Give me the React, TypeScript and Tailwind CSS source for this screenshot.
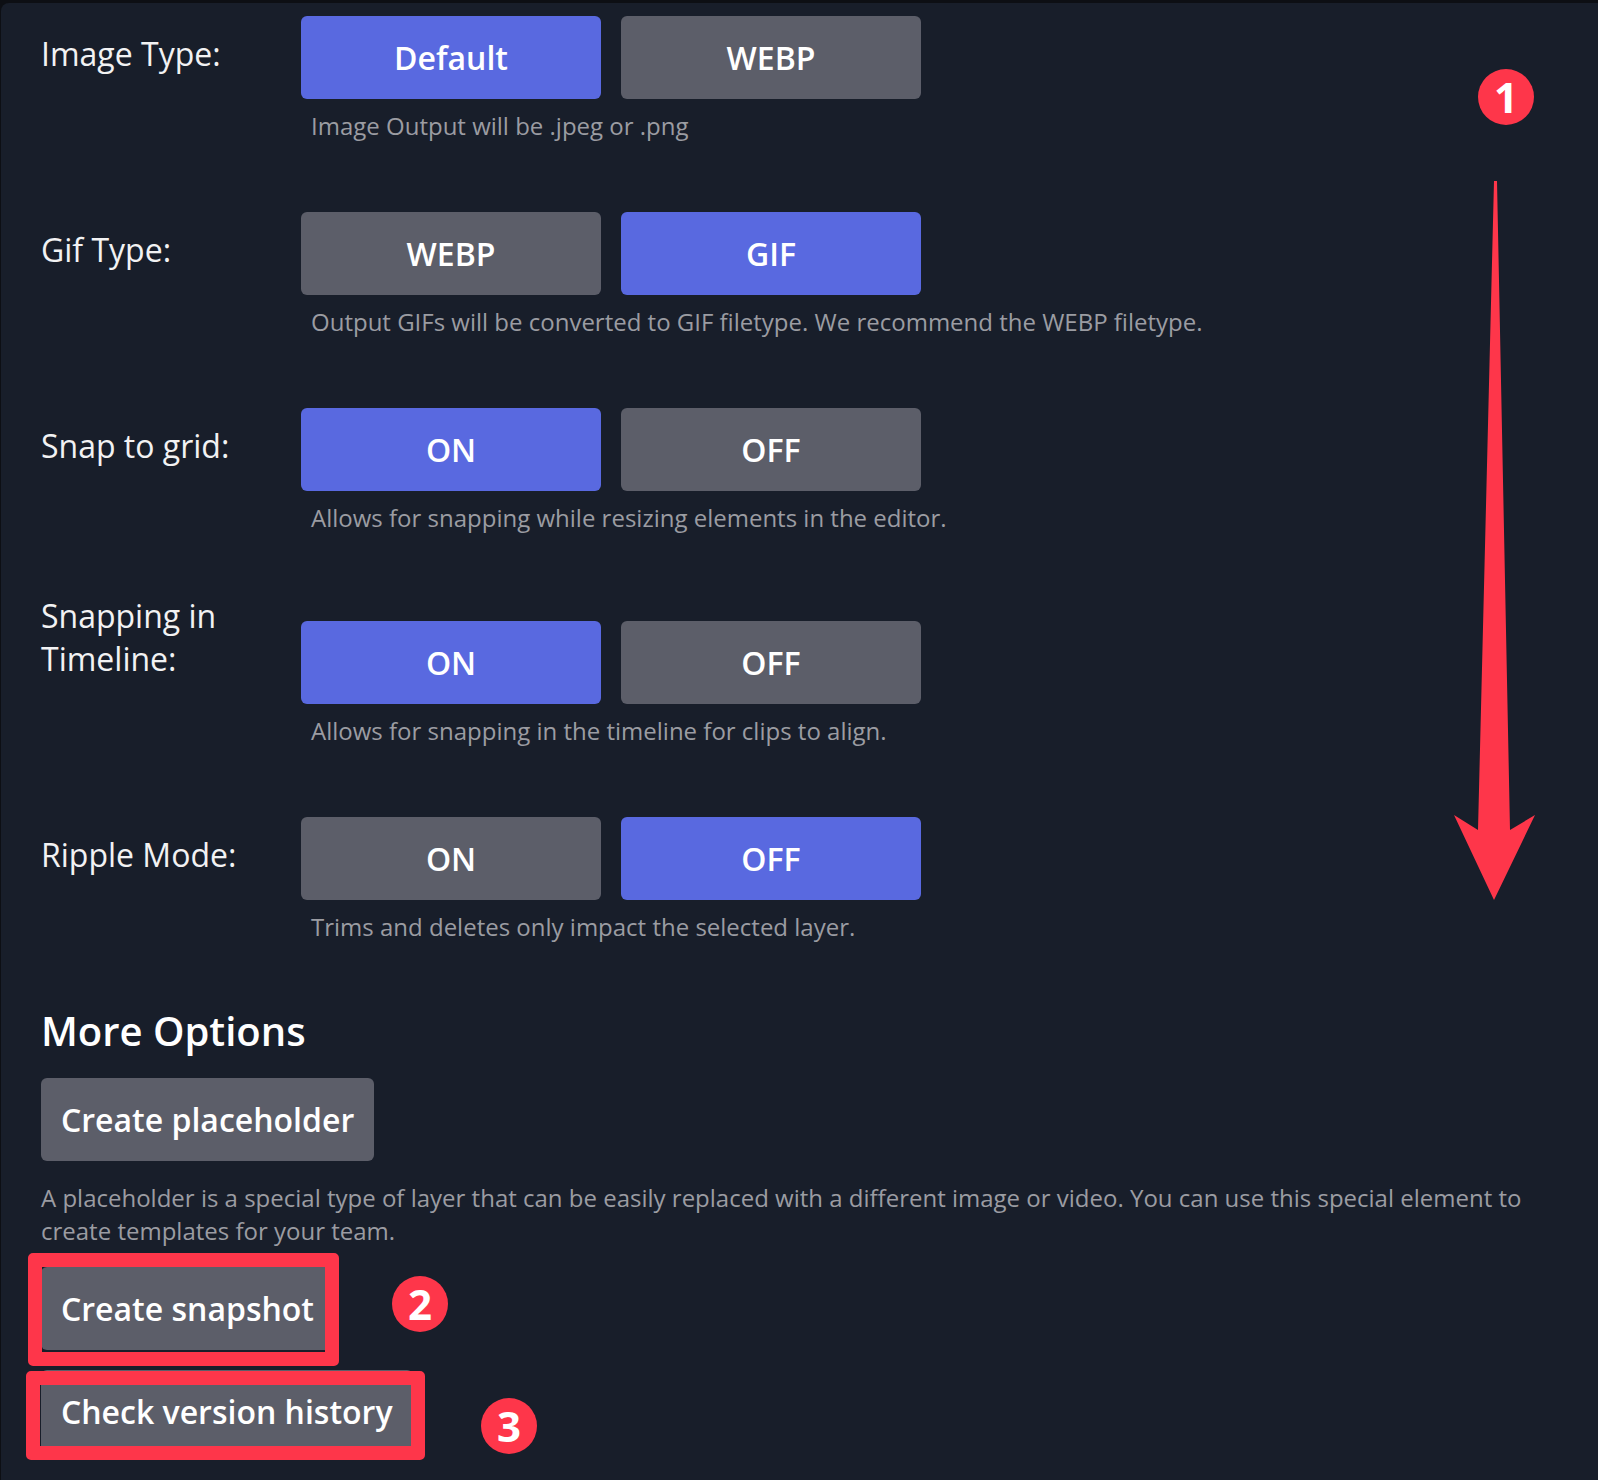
const rows = [
  { label: 'Image Type:', options: ['Default', 'WEBP'], active: 0, help: 'Image Output will be .jpeg or .png', top: 'mt-0' },
  { label: 'Gif Type:', options: ['WEBP', 'GIF'], active: 1, help: 'Output GIFs will be converted to GIF filetype. We recommend the WEBP filetype.', top: 'mt-[70px]' },
  { label: 'Snap to grid:', options: ['ON', 'OFF'], active: 0, help: 'Allows for snapping while resizing elements in the editor.', top: 'mt-[70px]' },
  { label: 'Snapping in Timeline:', options: ['ON', 'OFF'], active: 0, help: 'Allows for snapping in the timeline for clips to align.', top: 'mt-[87px]' },
  { label: 'Ripple Mode:', options: ['ON', 'OFF'], active: 1, help: 'Trims and deletes only impact the selected layer.', top: 'mt-[70px]' },
];

function Badge({ n, className }: { n: number; className: string }) {
  return (
    <div className={`absolute flex h-[56px] w-[56px] items-center justify-center rounded-full bg-[#fe364a] text-[42px] font-bold leading-none text-white ${className}`}>
      {n}
    </div>
  );
}

function ActionButton({ children }: { children: string }) {
  return (
    <button className="flex h-[83px] items-center rounded-[6px] bg-[#5c5e69] px-[20px] text-[32px] font-semibold leading-none text-white">
      {children}
    </button>
  );
}

export default function App() {
  return (
    <div className="relative h-[1480px] w-[1598px] overflow-hidden bg-[#0d0f14] pt-[3px] font-['Open_Sans',sans-serif]">
      <div className="ml-[1px] h-full rounded-tl-[8px] bg-[#181e2a] pl-[40px] pt-[13px]">
        {rows.map((row) => (
          <div key={row.label} className={`flex ${row.top}`}>
            <div className="w-[260px] pt-[16px] text-[32px] leading-[43px] text-[#f2f2f3]">
              {row.label === 'Snapping in Timeline:' ? (
                <div className="-mt-[43px] w-[220px]">{row.label}</div>
              ) : (
                row.label
              )}
            </div>
            <div>
              <div className="flex gap-[20px]">
                {row.options.map((opt, i) => (
                  <button
                    key={opt}
                    className={`h-[83px] w-[300px] rounded-[6px] text-[32px] font-semibold text-white ${i === row.active ? 'bg-[#5969e0]' : 'bg-[#5c5e69]'}`}
                  >
                    {opt}
                  </button>
                ))}
              </div>
              <p className="mt-[10px] pl-[10px] text-[24px] leading-[33px] text-[#9b9ca2]">{row.help}</p>
            </div>
          </div>
        ))}

        <h2 className="mt-[61px] text-[40px] font-semibold leading-[54px] text-white">More Options</h2>
        <div className="mt-[20px] flex">
          <ActionButton>Create placeholder</ActionButton>
        </div>
        <p className="mt-[20px] w-[1500px] text-[24px] leading-[33px] text-[#9b9ca2]">
          A placeholder is a special type of layer that can be easily replaced with a different image or video. You can use this special element to create templates for your team.
        </p>
        <div className="mt-[20px] flex">
          <div className="relative">
            <ActionButton>Create snapshot</ActionButton>
            <div className="absolute -left-[13px] -right-[5px] -top-[14px] -bottom-[16px] rounded-[5px] border-[14px] border-[#fe364a]" />
          </div>
        </div>
        <div className="mt-[20px] flex">
          <div className="relative">
            <ActionButton>Check version history</ActionButton>
            <div className="absolute -left-[15px] -right-[12px] top-[1px] -bottom-[7px] rounded-[5px] border-[14px] border-[#fe364a]" />
          </div>
        </div>
      </div>

      <Badge n={1} className="left-[1478px] top-[69px]" />
      <Badge n={2} className="left-[392px] top-[1276px]" />
      <Badge n={3} className="left-[481px] top-[1398px]" />

      <svg className="absolute left-[1450px] top-[178px]" width="90" height="725" viewBox="0 0 90 725">
        <path d="M44 3 L47 3 L60 652 L85 637 L44 722 L4 637 L28 652 Z" fill="#fe364a" />
      </svg>
    </div>
  );
}
